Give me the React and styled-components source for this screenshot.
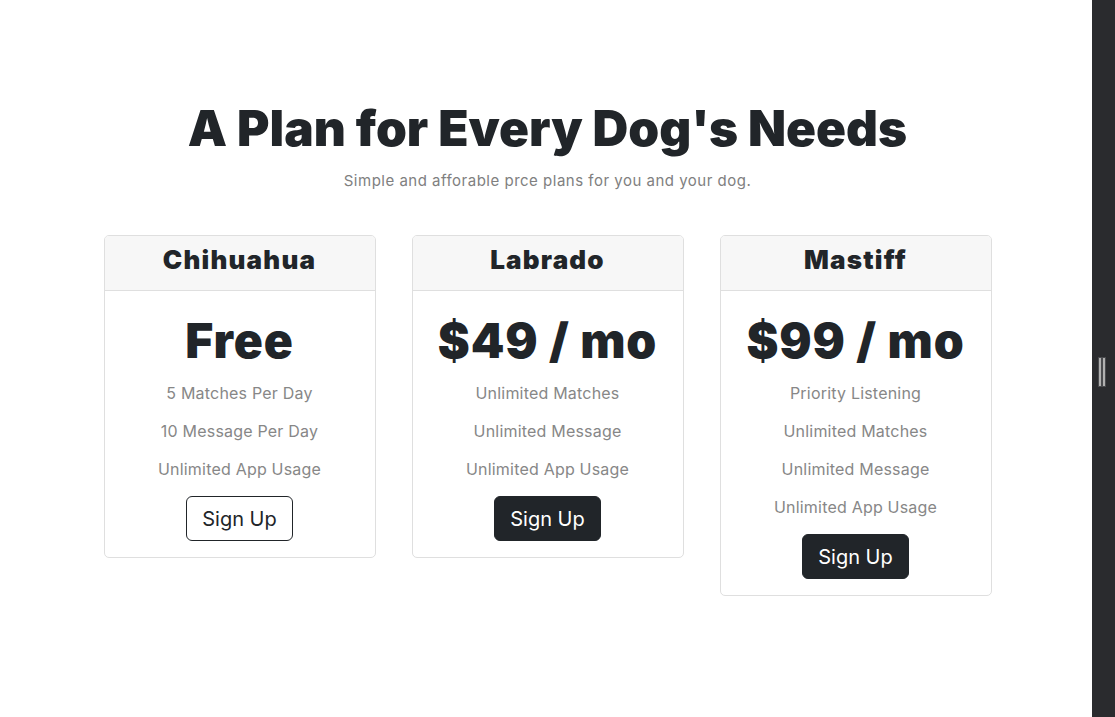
import React from "react";
import styled, { createGlobalStyle } from "styled-components";

const GlobalStyle = createGlobalStyle`
  html, body {
    margin: 0;
    padding: 0;
    background: #ffffff;
  }
  body {
    font-family: "Inter", "DejaVu Sans", sans-serif;
    color: #212529;
  }
  *, *::before, *::after {
    box-sizing: border-box;
  }
`;

const plans = [
  {
    name: "Chihuahua",
    price: "Free",
    features: ["5 Matches Per Day", "10 Message Per Day", "Unlimited App Usage"],
    outline: true,
  },
  {
    name: "Labrado",
    price: "$49 / mo",
    features: ["Unlimited Matches", "Unlimited Message", "Unlimited App Usage"],
  },
  {
    name: "Mastiff",
    price: "$99 / mo",
    features: [
      "Priority Listening",
      "Unlimited Matches",
      "Unlimited Message",
      "Unlimited App Usage",
    ],
  },
];

const Page = styled.div`
  display: flex;
  width: 100%;
  height: 717px;
  overflow: hidden;
`;

const Main = styled.main`
  flex: 1;
  display: flex;
  flex-direction: column;
  align-items: center;
  padding-top: 98px;
  padding-left: 3px;
`;

const Title = styled.h1`
  margin: 0;
  font-family: "Inter", sans-serif;
  font-weight: 900;
  font-size: 49.5px;
  line-height: 60px;
  letter-spacing: 0;
  color: #212529;
`;

const Subtitle = styled.p`
  margin: 13px 0 0;
  font-family: "Inter", sans-serif;
  font-size: 15px;
  font-weight: 400;
  letter-spacing: 0.5px;
  color: #808080;
`;

const Deck = styled.div`
  display: flex;
  align-items: flex-start;
  gap: 36px;
  margin-top: 45px;
`;

const Card = styled.div`
  width: 272px;
  border: 1px solid #dfdfdf;
  border-radius: 5px;
  background: #ffffff;
  overflow: hidden;
`;

const CardHeader = styled.div`
  height: 55px;
  display: flex;
  align-items: center;
  justify-content: center;
  padding-bottom: 8px;
  background: #f7f7f7;
  border-bottom: 1px solid #dfdfdf;
`;

const PlanName = styled.h4`
  margin: 0;
  font-family: "Inter", sans-serif;
  font-weight: 900;
  font-size: 26px;
  letter-spacing: 1.2px;
  color: #212529;
`;

const CardBody = styled.div`
  display: flex;
  flex-direction: column;
  align-items: center;
  padding: 20px 20px 16px;
`;

const Price = styled.div`
  font-family: "Inter", sans-serif;
  font-weight: 900;
  font-size: 48px;
  line-height: 60px;
  letter-spacing: 0.9px;
  color: #212529;
`;

const Features = styled.ul`
  list-style: none;
  margin: 3px 0 8px;
  padding: 0;
  text-align: center;
`;

const Feature = styled.li`
  font-family: "Inter", sans-serif;
  font-size: 16px;
  line-height: 38px;
  letter-spacing: 0.2px;
  color: #878787;
`;

const Button = styled.button`
  width: 107px;
  height: 45px;
  border-radius: 6px;
  font-family: "Inter", sans-serif;
  font-size: 20px;
  font-weight: 400;
  cursor: pointer;
  border: 1px solid #212529;
  background: ${(p) => (p.$outline ? "#ffffff" : "#212529")};
  color: ${(p) => (p.$outline ? "#212529" : "#ffffff")};
`;

const SideStrip = styled.aside`
  width: 23px;
  flex-shrink: 0;
  background: #2a2b2e;
  display: flex;
  align-items: center;
  justify-content: center;
`;

const Handle = styled.div`
  display: flex;
  gap: 2px;
  margin-top: 26px;
  margin-left: -3px;
`;

const HandleLine = styled.span`
  width: 2px;
  height: 28px;
  background: #b0b0b0;
  box-shadow: 0 0 0 1px #4a4b4e;
`;

export default function App() {
  return (
    <>
      <GlobalStyle />
      <Page>
        <Main>
          <Title>A Plan for Every Dog's Needs</Title>
          <Subtitle>Simple and afforable prce plans for you and your dog.</Subtitle>
          <Deck>
            {plans.map((plan) => (
              <Card key={plan.name}>
                <CardHeader>
                  <PlanName>{plan.name}</PlanName>
                </CardHeader>
                <CardBody>
                  <Price>{plan.price}</Price>
                  <Features>
                    {plan.features.map((f) => (
                      <Feature key={f}>{f}</Feature>
                    ))}
                  </Features>
                  <Button $outline={plan.outline}>Sign Up</Button>
                </CardBody>
              </Card>
            ))}
          </Deck>
        </Main>
        <SideStrip>
          <Handle>
            <HandleLine />
            <HandleLine />
          </Handle>
        </SideStrip>
      </Page>
    </>
  );
}
